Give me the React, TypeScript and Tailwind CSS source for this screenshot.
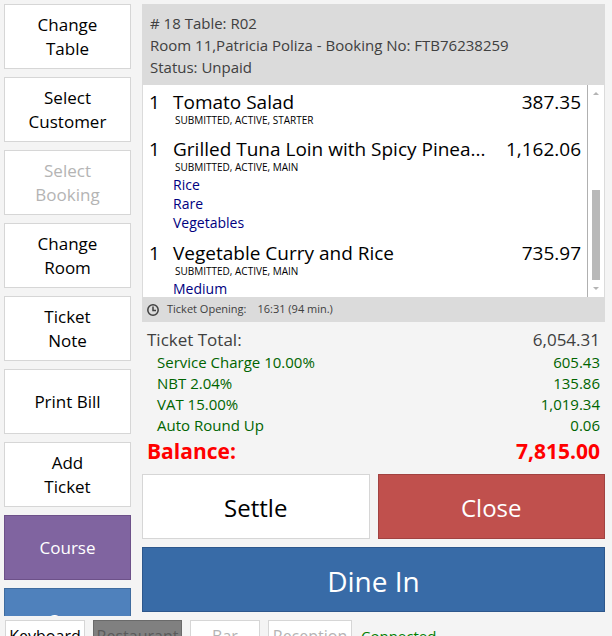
import clsx from 'clsx';

type Action = {
  lines: string[];
  tone?: 'purple' | 'blue';
  disabled?: boolean;
};

const actions: Action[] = [
  { lines: ['Change', 'Table'] },
  { lines: ['Select', 'Customer'] },
  { lines: ['Select', 'Booking'], disabled: true },
  { lines: ['Change', 'Room'] },
  { lines: ['Ticket', 'Note'] },
  { lines: ['Print Bill'] },
  { lines: ['Add', 'Ticket'] },
  { lines: ['Course'], tone: 'purple' },
  { lines: ['Copy'], tone: 'blue' },
];

const items = [
  { qty: 1, name: 'Tomato Salad', price: '387.35', state: 'SUBMITTED, ACTIVE, STARTER', tags: [] },
  {
    qty: 1,
    name: 'Grilled Tuna Loin with Spicy Pinea...',
    price: '1,162.06',
    state: 'SUBMITTED, ACTIVE, MAIN',
    tags: ['Rice', 'Rare', 'Vegetables'],
  },
  { qty: 1, name: 'Vegetable Curry and Rice', price: '735.97', state: 'SUBMITTED, ACTIVE, MAIN', tags: ['Medium'] },
];

const charges = [
  { label: 'Service Charge 10.00%', value: '605.43' },
  { label: 'NBT 2.04%', value: '135.86' },
  { label: 'VAT 15.00%', value: '1,019.34' },
  { label: 'Auto Round Up', value: '0.06' },
];

const ActionList = () => (
  <nav className="flex w-[127px] shrink-0 flex-col gap-2 overflow-hidden">
    {actions.map((action) => (
      <button
        key={action.lines.join(' ')}
        type="button"
        disabled={action.disabled}
        className={clsx(
          'h-[65px] shrink-0 border pt-px text-[17px] leading-6',
          !action.tone && 'border-[#d6d6d6] bg-white',
          action.tone === 'purple' && 'border-[#6d5189] bg-[#8064a0] text-white',
          action.tone === 'blue' && 'border-[#3f6c9f] bg-[#4f81bc] text-white',
          action.disabled && 'text-[#b4b4b4]'
        )}
      >
        {action.lines.map((line) => (
          <span key={line} className="block">
            {line}
          </span>
        ))}
      </button>
    ))}
  </nav>
);

const OrderList = () => (
  <div className="flex min-h-0 flex-1 border-x border-[#dbdbdb] bg-white">
    <ul className="min-w-0 flex-1 overflow-hidden pt-[5px]">
      {items.map((item) => (
        <li key={item.name} className="flex px-[6px] pb-[9px]">
          <span className="w-6 shrink-0 text-[19px] leading-6">{item.qty}</span>
          <div className="min-w-0 flex-1">
            <div className="flex justify-between text-[19px] leading-6 whitespace-nowrap">
              <span>{item.name}</span>
              <span>{item.price}</span>
            </div>
            <p className="mb-[2px] pl-[2px] text-[10px] leading-3">{item.state}</p>
            {item.tags.map((tag) => (
              <p key={tag} className="text-sm leading-[19px] text-[#000080]">
                {tag}
              </p>
            ))}
          </div>
        </li>
      ))}
    </ul>

    {/* Scroll track */}
    <div className="flex w-[17px] flex-col items-center border-l border-[#b0b0b0] py-[7px]">
      <svg width="6" height="3" viewBox="0 0 6 3" fill="#b4b4b4">
        <path d="M3 0 6 3H0z" />
      </svg>
      <div className="flex-1" />
      <div className="mb-[7px] h-[90px] w-2 bg-[#b9b9b9]" />
      <svg width="6" height="3" viewBox="0 0 6 3" fill="#b4b4b4">
        <path d="M0 0H6L3 3z" />
      </svg>
    </div>
  </div>
);

const Totals = () => (
  <dl className="px-[5px] pt-[6px] pb-2">
    <div className="flex justify-between text-[17px] leading-6 text-[#404040]">
      <dt>Ticket Total:</dt>
      <dd>6,054.31</dd>
    </div>
    {charges.map((charge) => (
      <div key={charge.label} className="flex justify-between pl-[10px] text-[15px] leading-[21px] text-[#006400]">
        <dt>{charge.label}</dt>
        <dd>{charge.value}</dd>
      </div>
    ))}
    <div className="flex justify-between text-[21px] leading-[30px] font-bold text-[#ff0000]">
      <dt>Balance:</dt>
      <dd>7,815.00</dd>
    </div>
  </dl>
);

const Departments = () => (
  <footer className="flex h-5 shrink-0 items-start gap-2 overflow-hidden pt-1 pl-[5px] text-base leading-[30px]">
    <button type="button" className="w-20 shrink-0 border border-[#d6d6d6] bg-white">
      Keyboard
    </button>
    <button type="button" className="w-[89px] shrink-0 border border-[#6a6a6a] bg-[#808080] text-[#5a5a5a]">
      Restaurant
    </button>
    <button type="button" disabled className="w-[70px] shrink-0 border border-[#d6d6d6] bg-white text-[#b4b4b4]">
      Bar
    </button>
    <button type="button" disabled className="w-[84px] shrink-0 border border-[#d6d6d6] bg-white text-[#b4b4b4]">
      Reception
    </button>
    <span className="border border-transparent text-[15px] text-[#008000]">Connected</span>
  </footer>
);

const App = () => {
  return (
    <div className="flex h-screen flex-col overflow-hidden bg-[#f4f4f4] font-['Open_Sans','Noto_Sans',sans-serif] text-black">
      <div className="flex min-h-0 flex-1 gap-[11px] pt-1 pr-[7px] pl-1">
        <ActionList />

        <main className="flex min-w-0 flex-1 flex-col pb-1">
          <header className="bg-[#dbdbdb] px-2 pt-2 pb-[7px] text-[15px] leading-[22px] text-[#404040]">
            <p># 18 Table: R02</p>
            <p>Room 11,Patricia Poliza - Booking No: FTB76238259</p>
            <p>Status: Unpaid</p>
          </header>

          <OrderList />

          <div className="flex h-[25px] shrink-0 items-center bg-[#dbdbdb] pl-[5px] text-[11px] text-[#404040]">
            <svg width="12" height="12" viewBox="0 0 12 12" fill="none" stroke="#404040" strokeWidth="1.5" className="mr-2">
              <circle cx="6" cy="6" r="5.2" />
              <path d="M6 2.5V6.5H9" />
            </svg>
            <span className="mr-[11px]">Ticket Opening:</span>
            <span>16:31 (94 min.)</span>
          </div>

          <Totals />

          <div className="grid grid-cols-2 gap-2">
            <button type="button" className="h-[65px] border border-[#d6d6d6] bg-white pt-[3px] text-2xl">
              Settle
            </button>
            <button type="button" className="h-[65px] border border-[#a14241] bg-[#c0504d] pt-[3px] text-2xl text-white">
              Close
            </button>
            <button type="button" className="col-span-2 h-[65px] border border-[#2d578c] bg-[#386ba7] pt-[3px] text-[28px] text-white">
              Dine In
            </button>
          </div>
        </main>
      </div>

      <Departments />
    </div>
  );
};

export default App;
